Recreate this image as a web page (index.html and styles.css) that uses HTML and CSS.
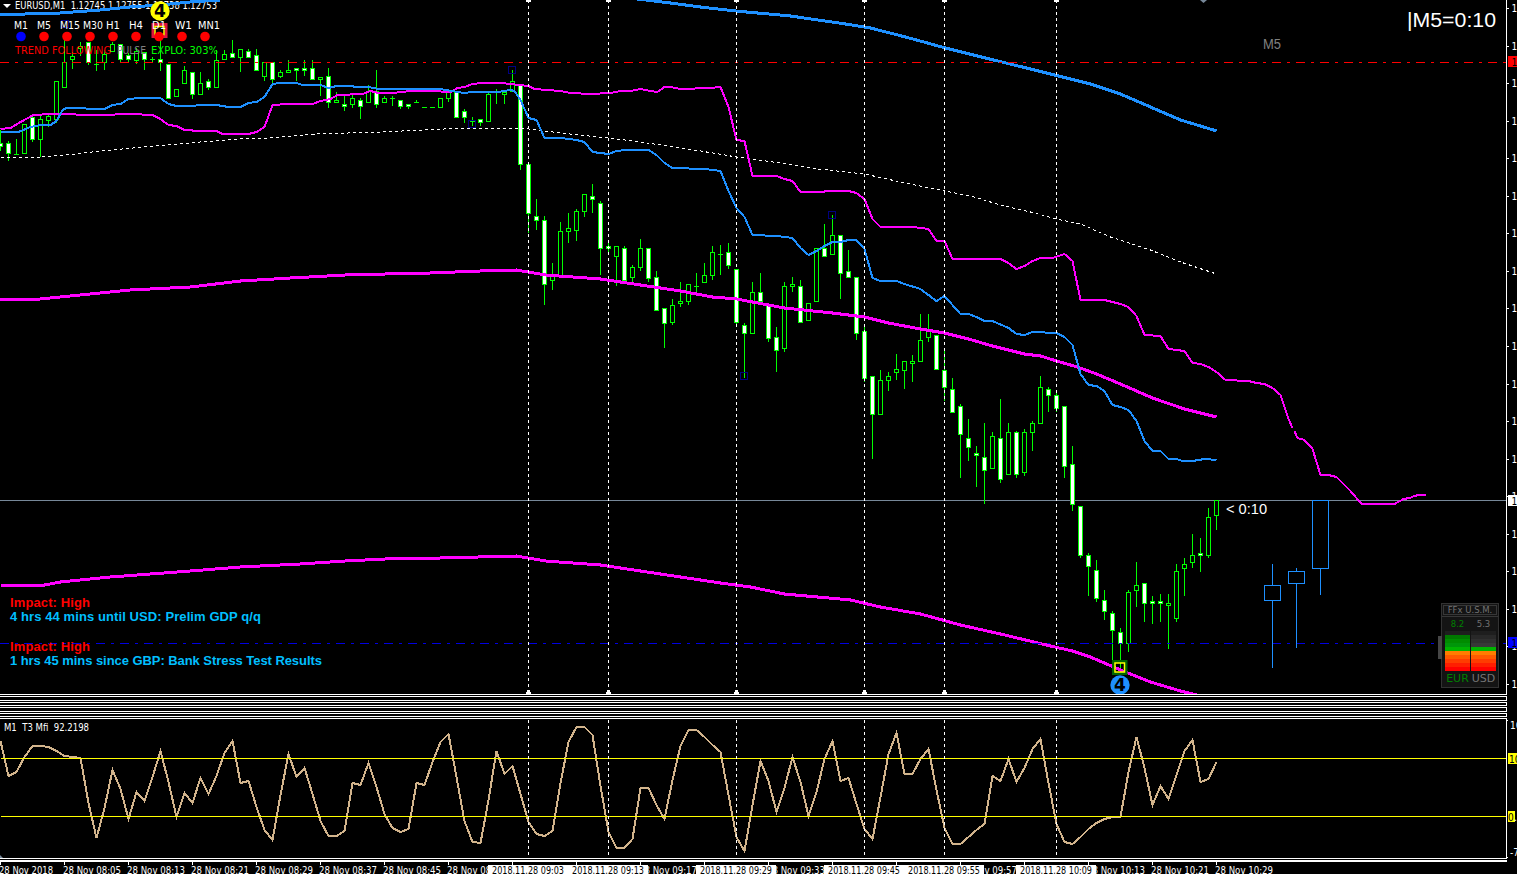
FILE: index.html
```html
<!DOCTYPE html>
<html lang="en">
<head>
    <meta charset="UTF-8">
    <meta name="viewport" content="width=device-width, initial-scale=1.0">
    <title>EURUSD,M1</title>
    <link rel="stylesheet" href="styles.css">
</head>
<body>
    <div class="terminal">
        <div class="row">
            <div class="panel main-panel">
                <svg class="plot" width="1506" height="694" viewBox="0 0 1506 694">
                    <g class="crisp" transform="translate(0.5 0.5)">
                        <path class="price-line" d="M-0.5 500H1506" />
                        <g id="candles"></g>
                        <g id="averages" transform="translate(0 -0.5)"></g>
                        <path class="resistance" d="M-0.5 62H1506" />
                        <path class="support" d="M-0.5 643H1506" />
                        <g id="separators"></g>
                        <g id="swings"></g>
                        <!-- M5 candles -->
                        <path class="m5-candle" d="M1272 563V585M1272 600V667M1264 585H1280V600H1264ZM1296 567V571M1296 583V647M1288 571H1304V583H1288ZM1320 568V594M1312 500H1328V568H1312Z" />
                    </g>

                    <rect class="signal-red" x="153" y="24.5" width="13" height="12" />
                    <rect class="signal-yellow" x="155" y="26.5" width="9" height="8" />

                    <rect class="signal-green" x="1113.5" y="661.5" width="12.500" height="12" />
                    <rect class="signal-yellow" x="1115" y="663" width="9.500" height="9" />
                    <circle class="fill-blue" cx="1120" cy="685" r="9.7" />
                    <text class="signal-number" x="1120" y="691">4</text>

                    <path class="fill-white" d="M3 4H11L7 8Z" />
                    <path class="fill-slate" d="M1200 0H1207L1203.500 3Z" />
                    <text class="small white" x="15" y="9" textLength="202" lengthAdjust="spacingAndGlyphs">EURUSD,M1&#160; 1.12745 1.12755 1.12738 1.12753</text>
                    <path class="line-upper crisp" d="M0 14H25L60 13L100 10L130 7L160 5L190 2L220 0" />
                    <circle class="fill-yellow" cx="160" cy="11" r="9.7" />
                    <text class="signal-number" x="160" y="17">4</text>

                    <g id="timeframes"></g>

                    <text class="small red" x="15" y="54" textLength="96" lengthAdjust="spacingAndGlyphs">TREND FOLLOWING</text>
                    <text class="small gray" x="117" y="54" textLength="29" lengthAdjust="spacingAndGlyphs">PULSE</text>
                    <text class="small lime" x="151" y="54" textLength="67" lengthAdjust="spacingAndGlyphs">EXPLO: 303%</text>

                    <text class="countdown" x="1407" y="27" textLength="89" lengthAdjust="spacingAndGlyphs">|M5=0:10</text>
                    <text class="m5-label" x="1263" y="49" textLength="18" lengthAdjust="spacingAndGlyphs">M5</text>
                    <text class="bar-timer" x="1226" y="514" textLength="41" lengthAdjust="spacingAndGlyphs">&lt; 0:10</text>

                    <g class="news">
                        <text class="red" x="10" y="607" textLength="80">Impact: High</text>
                        <text class="sky" x="10" y="621" textLength="251">4 hrs 44 mins until USD: Prelim GDP q/q</text>
                        <text class="red" x="10" y="651" textLength="80">Impact: High</text>
                        <text class="sky" x="10" y="665" textLength="312">1 hrs 45 mins since GBP: Bank Stress Test Results</text>
                    </g>
                </svg>

                <div class="meter">
                    <div class="meter-title">FFx U.S.M.</div>
                    <div class="meter-body">
                        <div class="meter-col strong">
                            <span class="meter-value">8.2</span>
                            <div class="bar">
                                <i class="off1"></i><i class="g1"></i><i class="g2"></i><i class="g3"></i><i class="g4"></i>
                                <i class="r1"></i><i class="r2"></i><i class="r3"></i><i class="r4"></i><i class="r5"></i>
                            </div>
                            <span class="meter-name">EUR</span>
                        </div>
                        <div class="meter-col">
                            <span class="meter-value">5.3</span>
                            <div class="bar">
                                <i class="off1"></i><i class="off2"></i><i class="off3"></i><i class="off4"></i><i class="g4"></i>
                                <i class="r1"></i><i class="r2"></i><i class="r3"></i><i class="r4"></i><i class="r5"></i>
                            </div>
                            <span class="meter-name">USD</span>
                        </div>
                    </div>
                    <div class="meter-handle"></div>
                </div>
            </div>
            <svg class="scale" width="10" height="695" viewBox="1507 0 10 695">
                <g id="priceScale"></g>
            </svg>
        </div>

        <div class="panel strip tall"></div>
        <div class="panel strip"></div>
        <div class="panel strip tall"></div>
        <div class="panel strip"></div>

        <div class="row">
            <div class="panel mfi-panel">
                <svg class="plot" width="1506" height="139" viewBox="0 719 1506 139">
                    <g class="crisp" transform="translate(0.5 0.5)">
                        <polyline id="mfi" transform="translate(0 -0.5)" />
                        <path class="level" d="M0.5 758H1506M0.5 816H1506" />
                        <g id="mfiSeparators"></g>
                    </g>
                    <path class="fill-slate" d="M0 855L4 859H0Z" />
                    <text class="small white" x="4" y="731" textLength="85" lengthAdjust="spacingAndGlyphs">M1&#160; T3 Mfi&#160; 92.2198</text>
                </svg>
            </div>
            <svg class="scale" width="10" height="141" viewBox="1507 718 10 141">
                <path class="tick" d="M1507 720.500H1508M1507 857.500H1508" />
                <text class="small white" x="1510" y="729">160</text>
                <rect class="level-box" x="1508" y="753" width="9" height="11" />
                <text class="small" x="1509" y="762.500">100</text>
                <rect class="level-box" x="1508" y="811" width="7" height="11" />
                <text class="small" x="1508" y="820.500">0</text>
                <text class="small white" x="1514" y="820.500">.</text>
                <text class="small white" x="1510" y="856">-75</text>
            </svg>
        </div>

        <svg class="time-axis" width="1517" height="14" viewBox="0 860 1517 14">
            <rect class="fill-white" x="0" y="860" width="1507" height="2" />
            <g id="timeLabels"></g>
        </svg>
    </div>
    <script src="script.js"></script>
</body>
</html>
```
FILE: styles.css
```css
body {
    margin: 0;
    background-color: #000;
    overflow: hidden;
    font-family: "DejaVu Sans Condensed", "DejaVu Sans", sans-serif;
}
.terminal {
    display: flex;
    flex-direction: column;
    gap: 1px;
    width: 1517px;
    height: 874px;
    overflow: hidden;
}
.row {
    display: flex;
    flex: none;
}
.panel {
    position: relative;
    box-sizing: border-box;
    width: 1507px;
    flex: none;
    border-right: 1px solid #fff;
    border-bottom: 1px solid #fff;
}
.main-panel {
    height: 695px;
}
.strip {
    height: 4px;
    border-top: 1px solid #fff;
}
.strip.tall {
    height: 5px;
}
.mfi-panel {
    height: 141px;
    border-top: 1px solid #fff;
}
svg {
    display: block;
    flex: none;
}
.crisp {
    shape-rendering: crispEdges;
}

/* Chart lines */
.crisp path, .crisp polyline, .line-upper {
    fill: none;
}
.price-line {
    stroke: #778899;
}
.resistance {
    stroke: #ff0000;
    stroke-dasharray: 9 6 3 6;
}
.support {
    stroke: #0000e0;
    stroke-dasharray: 9 6 3 6;
}
.separator {
    stroke: #fff;
    stroke-dasharray: 3 3;
}
.line-upper {
    stroke: #1e90ff;
    stroke-width: 3;
}
.line-kijun {
    stroke: #1e90ff;
    stroke-width: 2;
}
.line-span {
    stroke: #ff00ff;
    stroke-width: 2;
}
.line-band {
    stroke: #ff00ff;
    stroke-width: 3;
}
.line-mean {
    stroke: #fff;
    stroke-dasharray: 3 3;
}
.m5-candle {
    stroke: #1e90ff;
}
.swing {
    fill: none;
    stroke: #000080;
}
.wick {
    stroke: #00ff00;
}
.body {
    stroke: #00ff00;
    fill: #000;
}
.body.down {
    fill: #fff;
}
#mfi {
    stroke: #d2b48c;
    stroke-width: 2;
}
.level {
    stroke: #ffff00;
}
.level-box, .fill-yellow {
    fill: #ffff00;
}
.tick {
    stroke: #fff;
}

/* Signals */
.signal-red {
    fill: none;
    stroke: #dc143c;
    stroke-width: 3;
}
.signal-green {
    fill: none;
    stroke: #006400;
    stroke-width: 3;
}
.signal-yellow {
    fill: none;
    stroke: #ffff00;
    stroke-width: 1.5;
}
.signal-number {
    font: bold 17px "DejaVu Sans", sans-serif;
    text-anchor: middle;
    fill: #000;
}
.fill-blue {
    fill: #1e90ff;
}
.fill-white {
    fill: #fff;
}
.fill-slate {
    fill: #778899;
}

/* Text */
.small {
    font-size: 10px;
}
.tf-label {
    font-size: 11px;
    fill: #fff;
}
.white {
    fill: #fff;
}
.red {
    fill: #ff0000;
}
.gray {
    fill: #808080;
}
.lime {
    fill: #00ff00;
}
.sky {
    fill: #00bfff;
}
.blue {
    fill: #0000ff;
}
.countdown, .m5-label, .bar-timer {
    font-family: "Liberation Sans", Arial, sans-serif;
    font-size: 20px;
    fill: #fff;
}
.m5-label {
    font-size: 14px;
    fill: #808080;
}
.bar-timer {
    font-size: 15px;
}
.news {
    font: bold 13px "Liberation Sans", Arial, sans-serif;
}

/* Strength meter */
.meter {
    position: absolute;
    left: 1441px;
    top: 603px;
    box-sizing: border-box;
    width: 58px;
    height: 85px;
    background-color: #141414;
    border: 1px solid #323232;
    font-family: "DejaVu Sans", sans-serif;
    color: #737373;
}
.meter-title {
    box-sizing: border-box;
    height: 10px;
    margin: 1px;
    border: 1px solid #373737;
    font-size: 8.5px;
    line-height: 9px;
    text-align: center;
    white-space: nowrap;
}
.meter-body {
    display: flex;
    gap: 1px;
    padding: 0 2px 0 3px;
    border-top: 1px solid #373737;
}
.meter-col {
    display: flex;
    flex-direction: column;
    align-items: center;
    flex: 1;
}
.meter-col.strong {
    color: #008000;
}
.meter-value {
    height: 14px;
    font-size: 8.5px;
    line-height: 15px;
}
.bar {
    display: flex;
    flex-direction: column;
    width: 100%;
    height: 40px;
}
.bar i {
    flex: 1;
}
.meter-name {
    font-size: 11px;
    line-height: 16px;
}
.meter-handle {
    position: absolute;
    left: -4px;
    top: 32px;
    width: 4px;
    height: 23px;
    background-color: #464646;
}
.off1 { background-color: #1e1e1e; }
.off2 { background-color: #282828; }
.off3 { background-color: #303030; }
.off4 { background-color: #383838; }
.g1 { background-color: #007800; }
.g2 { background-color: #008c00; }
.g3 { background-color: #00960a; }
.g4 { background-color: #00b400; }
.r1 { background-color: #ff7d00; }
.r2 { background-color: #ff5a00; }
.r3 { background-color: #ff3c00; }
.r4 { background-color: #ff1e00; }
.r5 { background-color: #ff0000; }
```
FILE: script.js
```js
const STEP = 8;

// high, body top, body bottom, low, 1 = down candle
const candles = [
    [130,143,146,150,1],[141,143,153,160,1],[139,154,154,154,0],[124,124,153,153,0],[115,117,139,141,1],
    [115,119,139,156,0],[115,116,120,126,0],[81,81,119,122,0],[40,62,87,87,0],[52,56,59,68,0],
    [42,46,48,55,0],[42,42,62,64,1],[50,64,64,70,0],[50,54,62,69,0],[42,44,51,51,0],
    [44,44,59,61,1],[53,55,59,61,1],[48,51,60,63,0],[52,52,59,69,1],[57,59,59,62,0],
    [35,59,62,70,1],[64,64,98,98,1],[89,89,96,96,0],[66,70,83,83,0],[72,72,94,98,1],
    [72,83,94,94,0],[79,81,87,89,1],[50,60,87,87,0],[50,54,59,59,0],[40,53,57,57,1],
    [49,49,57,71,0],[49,51,57,57,1],[49,55,70,70,1],[62,62,76,80,0],[62,62,79,83,1],
    [70,72,76,77,0],[60,70,72,72,0],[68,68,70,80,1],[60,68,70,75,1],[60,68,79,79,1],
    [77,77,79,95,0],[68,76,102,107,1],[92,100,102,102,0],[96,104,106,110,1],[93,98,104,107,0],
    [98,100,106,118,1],[85,91,102,102,0],[70,91,104,107,1],[96,98,102,102,0],[96,98,98,105,0],
    [100,100,106,108,1],[104,104,106,108,1],[100,102,102,102,0],[107,107,107,107,0],[107,107,107,107,0],
    [98,98,107,107,0],[92,92,98,101,0],[91,91,117,117,1],[109,111,117,122,1],[117,121,121,125,0],
    [119,119,122,125,1],[92,94,121,121,0],[89,92,92,103,0],[92,92,94,103,0],[70,81,91,91,0],
    [84,84,164,169,1],[164,164,213,232,1],[199,216,220,229,1],[216,220,284,304,1],[263,276,280,289,0],
    [222,231,275,275,0],[213,228,231,242,0],[209,211,230,240,0],[194,194,211,216,0],[184,196,199,212,1],
    [201,203,248,274,1],[240,246,248,253,1],[246,246,256,285,0],[246,248,280,280,1],[265,267,277,281,0],
    [239,248,267,270,0],[248,248,278,281,1],[271,277,310,310,1],[308,308,323,347,1],[299,305,322,324,0],
    [282,301,303,306,0],[284,284,301,304,0],[273,286,286,291,0],[263,275,282,282,0],[246,252,275,279,0],
    [245,254,254,274,0],[243,252,265,268,1],[269,269,322,325,1],[323,325,333,377,1],[282,292,333,333,0],
    [273,292,301,301,1],[305,305,338,341,1],[327,337,350,371,1],[282,286,348,351,0],[277,284,286,291,0],
    [280,286,322,322,1],[303,303,320,320,0],[248,248,301,301,0],[224,248,256,256,1],[215,235,254,254,0],
    [235,235,273,298,1],[250,271,277,277,1],[277,277,333,339,1],[325,331,378,381,1],[376,376,414,458,1],
    [370,380,414,414,0],[372,376,380,390,0],[354,369,372,379,0],[361,361,370,388,0],[355,361,363,381,0],
    [314,340,361,361,0],[314,330,337,341,0],[335,335,369,369,1],[350,370,387,400,1],[378,389,412,412,1],
    [404,406,434,477,1],[419,438,447,460,1],[446,453,455,486,1],[423,457,470,503,1],[432,436,468,468,0],
    [399,438,479,482,1],[423,432,474,474,0],[431,432,474,477,1],[429,432,472,475,0],[421,423,432,450,0],
    [376,387,423,423,0],[387,389,395,411,1],[391,395,408,411,1],[406,406,466,477,1],[446,464,504,510,1],
    [506,506,555,557,1],[553,555,566,595,1],[560,570,598,601,1],[590,600,611,619,1],[611,613,630,661,1],
    [628,632,643,668,1],[590,592,643,651,0],[562,585,590,606,0],[583,583,603,621,1],[596,601,603,623,1],
    [594,601,603,621,1],[594,603,605,648,0],[564,571,618,621,0],[558,564,568,595,0],[534,555,562,567,0],
    [538,553,555,571,1],[508,517,555,557,0],[500,500,515,529,0]
];

const averages = [
    ['line-mean', '0,157 40,157 66,155 100,151 144,147 200,142 240,139 270,138 316,134 380,132 444,129 512,128 528,129 560,133 608,138 640,142 700,151 736,157 780,163 818,169 864,174 900,182 944,191 970,196 1000,205 1030,212 1056,219 1080,224 1110,237 1150,250 1180,262 1216,274'],
    ['line-upper', '637,-1 670,3 700,7 735,11 790,16 845,24 870,28 905,37 945,48 985,58 1030,69 1058,76 1090,84 1120,94 1150,107 1180,120 1200,126 1216,131'],
    ['line-band', '0,300 40,299 80,295 130,290 190,287 240,281 290,278 345,275 385,274 430,273 480,271 516,270 545,275 600,279 640,285 680,291 712,297 736,299 752,302 784,308 832,313 864,317 888,323 920,329 944,333 968,339 992,346 1024,354 1040,356 1056,361 1077,367 1096,374 1120,384 1152,398 1184,409 1216,417'],
    ['line-band', '0,585 44,585 60,582 110,577 190,571 240,567 300,564 345,561 385,559 440,558 516,556 545,561 600,565 640,571 680,577 720,583 750,587 784,594 850,600 880,607 920,614 960,625 1000,634 1050,646 1072,651 1090,657 1120,670 1150,682 1180,691 1196,695'],
    ['line-span', '0,129 10,128 20,122 33,115 50,114 100,115 130,114 152,115 160,119 168,125 176,126 184,130 200,131 216,131 222,134 248,134 256,132 264,127 272,105 288,104 312,104 320,101 330,99 337,95 362,94 370,91 378,93 392,93 410,91 430,91 450,92 457,88 464,87 472,84 482,83 500,83 510,84 528,86 534,89 560,91 570,93 590,94 610,93 620,91 630,91 640,89 650,91 657,92 664,87 670,87 680,89 710,88 720,87 728,107 736,140 744,141 752,176 776,176 784,179 792,181 800,192 820,192 828,191 848,191 856,193 864,199 872,219 880,227 912,227 928,229 936,241 944,241 952,259 1000,259 1008,263 1016,269 1024,266 1032,261 1040,258 1052,258 1064,254 1072,261 1080,300 1104,300 1120,304 1128,307 1136,316 1144,335 1160,336 1168,349 1184,351 1192,363 1200,364 1208,367 1216,372 1225,380 1248,381 1256,383 1264,384 1272,388 1280,395 1288,419 1292,428'],
    ['line-span', '1294,431 1297,438 1304,440 1312,449 1320,475 1328,475 1336,477 1350,491 1361,504 1394,504 1403,499 1409,498 1414,496 1418,495 1425,495'],
    ['line-kijun', '0,132 18,132 30,127 40,125 50,125 56,121 62,110 66,108 104,109 112,105 120,104 128,99 140,98 160,98 168,104 176,106 216,105 228,107 240,107 248,103 256,102 264,97 272,84 280,83 296,83 302,85 320,85 328,88 336,86 350,86 356,87 368,87 378,89 427,89 440,89 445,90 458,92 463,93 473,92 497,92 510,90 514,91 520,100 528,118 536,120 544,138 560,138 576,140 584,142 592,152 608,154 616,151 626,150 648,150 656,155 664,163 672,168 704,169 720,171 728,191 736,208 744,217 752,235 776,236 792,238 800,248 808,255 816,251 824,246 832,242 840,242 848,240 856,240 864,249 872,278 880,281 896,281 904,284 920,289 928,295 936,301 944,296 952,305 960,314 968,314 976,317 984,321 992,321 1008,328 1016,334 1024,335 1032,332 1056,333 1064,337 1072,345 1080,374 1088,385 1096,386 1104,391 1112,405 1120,407 1128,410 1136,421 1144,441 1152,451 1160,451 1168,459 1176,459 1182,461 1192,461 1204,459 1216,460']
];

const mfi = [
    741,776,772,757,746,746,747,751,756,757,758,803,838,808,770,789,819,792,801,777,
    751,782,817,793,803,778,794,776,753,741,783,781,807,830,840,795,754,777,768,794,
    821,836,836,831,783,785,763,787,814,828,832,829,783,785,762,742,734,777,821,842,
    843,800,751,774,766,794,822,834,836,831,783,742,727,727,735,786,832,848,848,839,
    788,788,805,819,780,746,730,730,737,745,752,795,837,851,805,761,781,812,788,757,
    782,816,792,759,741,781,778,804,829,839,797,754,733,774,774,759,749,790,828,844,
    844,837,830,824,776,781,759,782,768,749,739,783,824,842,844,837,829,823,819,817,
    817,772,737,768,805,786,799,775,751,740,782,779,762
];

const separators = [528, 608, 736, 864, 944, 1056];
const swings = [[61, 20], [468, 120], [508, 66], [740, 372], [828, 211]];
const timeframes = [['M1', 14], ['M5', 14], ['M15', 20], ['M30', 20], ['H1', 14], ['H4', 14], ['D1', 14], ['W1', 17], ['MN1', 22]];

function fill(id, html) {
    document.getElementById(id).innerHTML = html;
}

fill('candles', candles.map(([high, top, bottom, low, down], i) => {
    const x = i * STEP;
    const wick = `<path class="wick" d="M${x} ${high - 0.5}V${top}M${x} ${bottom}V${low + 0.5}"/>`;
    if (top === bottom) {
        return wick + `<path class="wick" d="M${x - 2.5} ${top}H${x + 2.5}"/>`;
    }
    return wick + `<rect class="body${down ? ' down' : ''}" x="${x - 2}" y="${top}" width="4" height="${bottom - top}"/>`;
}).join(''));

fill('averages', averages.map(([name, points]) => `<polyline class="${name}" points="${points}"/>`).join(''));

fill('separators', separators.map(x =>
    `<path class="separator" d="M${x} -0.5V694"/>` +
    `<rect class="fill-white" x="${x - 2.5}" y="691.5" width="5" height="2"/>` +
    `<rect class="fill-white" x="${x - 1.5}" y="689.5" width="3" height="2"/>` +
    `<rect class="fill-white" x="${x - 2.5}" y="-0.5" width="5" height="2"/>`
).join(''));

fill('mfiSeparators', separators.map(x => `<path class="separator" d="M${x} 719V858"/>`).join(''));

fill('swings', swings.map(([x, y]) => `<rect class="swing" x="${x}" y="${y}" width="7" height="7"/>`).join(''));

document.getElementById('mfi').setAttribute('points', mfi.map((y, i) => `${i * STEP},${y}`).join(' '));

fill('timeframes', timeframes.map(([name, width], i) => {
    const x = 14 + i * 23;
    return `<text class="tf-label" x="${x}" y="29" textLength="${width}" lengthAdjust="spacingAndGlyphs">${name}</text>` +
        `<circle class="${i === 0 ? 'blue' : 'red'}" cx="${x + 7}" cy="36.5" r="4.8"/>`;
}).join(''));

// Price scale, the digits run off the right edge
let scale = '';
for (let i = 0; i < 19; i++) {
    const y = Math.round(8 + i * 37.55);
    scale += `<path class="tick" d="M1507 ${y + 0.5}H1509"/><text class="small white" x="1511.5" y="${y + 4}">1.12</text>`;
}
[[56, '#ff0000', '#000'], [495, '#fff', '#000'], [637, '#0000ff', '#000']].forEach(([y, bg, fg]) => {
    scale += `<rect x="1508" y="${y}" width="9" height="11" fill="${bg}"/><text class="small" x="1511.5" y="${y + 9.5}" fill="${fg}">1.12</text>`;
});
fill('priceScale', scale);

const times = ['2018', '08:05', '08:13', '08:21', '08:29', '08:37', '08:45', '08:53', '', '', '09:17', '', '09:33', '', '', '09:57', '', '10:13', '10:21', '10:29'];
let labels = '';
times.forEach((time, i) => {
    const x = i * 64;
    labels += `<path class="tick" d="M${x + 0.5} 862V865"/>`;
    if (time) {
        labels += `<text class="small white" x="${x - 1}" y="874" textLength="${i ? 58 : 54}" lengthAdjust="spacingAndGlyphs">28 Nov ${time}</text>`;
    }
});
[[488, '09:03'], [568, '09:13'], [696, '09:29'], [824, '09:45'], [904, '09:55'], [1016, '10:09']].forEach(([x, time]) => {
    labels += `<rect class="fill-white" x="${x}" y="865" width="80" height="9"/>` +
        `<text class="small" x="${x + 4}" y="874" textLength="72" lengthAdjust="spacingAndGlyphs">2018.11.28 ${time}</text>`;
});
fill('timeLabels', labels);
```
